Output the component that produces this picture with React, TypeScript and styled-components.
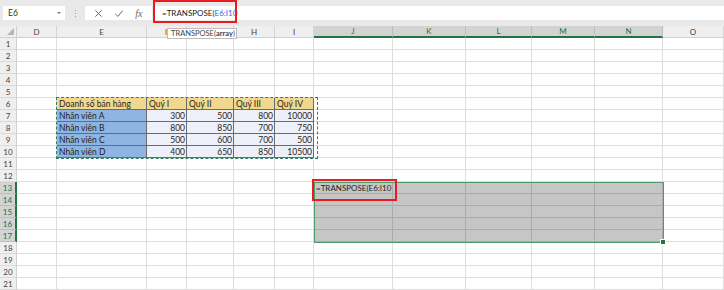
import React from "react";
import styled, { createGlobalStyle } from "styled-components";

const GlobalStyle = createGlobalStyle`
  html, body {
    margin: 0;
    padding: 0;
    background: #ffffff;
    overflow: hidden;
  }
  body {
    font-family: Lato, "Noto Sans", sans-serif;
  }
`;

const GREEN = "#217346";
const RED = "#ea1b1f";

const Page = styled.div`
  position: relative;
  width: 724px;
  height: 290px;
  overflow: hidden;
  background: #fff;
`;

const FormulaBar = styled.div`
  height: 26px;
  background: #e9e9e9;
  display: flex;
  align-items: flex-start;
  padding-top: 6px;
  box-sizing: border-box;
`;

const NameBox = styled.div`
  margin-left: 3px;
  width: 62px;
  height: 14px;
  background: #fff;
  display: flex;
  align-items: center;
  justify-content: space-between;
  padding: 0 4px 0 5px;
  box-sizing: border-box;
  font-size: 8.5px;
  color: #333;
`;

const Caret = styled.span`
  width: 0;
  height: 0;
  border-left: 2px solid transparent;
  border-right: 2px solid transparent;
  border-top: 2px solid #777;
`;

const Dots = styled.div`
  width: 20px;
  height: 14px;
  display: flex;
  flex-direction: column;
  align-items: center;
  justify-content: center;
  gap: 2px;
  span {
    width: 1px;
    height: 1px;
    background: #a0a0a0;
  }
`;

const Buttons = styled.div`
  width: 67px;
  height: 14px;
  background: #fff;
  display: flex;
  align-items: center;
  justify-content: space-around;
  padding: 0 4px;
  box-sizing: border-box;
  color: #666;
`;

const Fx = styled.span`
  font-family: "Liberation Serif", serif;
  font-style: italic;
  font-size: 10px;
  color: #666;
`;

const FormulaInput = styled.div`
  flex: 1;
  margin-left: 1px;
  height: 14px;
  background: #fff;
  display: flex;
  align-items: center;
  padding-left: 9px;
  font-size: 8px;
  color: #222;
`;

const Ref = styled.span`
  color: #2f6bd1;
`;

const Sheet = styled.div`
  display: grid;
  grid-template-columns: 17px 40px 90px 40px 47px 41px 39px 79px 73px 66px 63px 68px 1fr;
  grid-template-rows: 12px repeat(21, 12px);
  font-size: 8.5px;
`;

const Corner = styled.div`
  position: relative;
  background: #efefef;
  border-right: 1px solid #d0d0d0;
  border-bottom: 1px solid #d0d0d0;
  &::after {
    content: "";
    position: absolute;
    right: 2px;
    bottom: 2px;
    border-left: 7px solid transparent;
    border-bottom: 7px solid #b5b5b5;
  }
`;

const ColHead = styled.div<{ $on?: boolean }>`
  background: ${(p) => (p.$on ? "#d3d3d3" : "#efefef")};
  color: ${(p) => (p.$on ? GREEN : "#444")};
  border-right: 1px solid ${(p) => (p.$on ? "#bdbdbd" : "#d4d4d4")};
  border-bottom: ${(p) => (p.$on ? `2px solid ${GREEN}` : "1px solid #d0d0d0")};
  display: flex;
  align-items: center;
  justify-content: center;
  box-sizing: border-box;
  font-size: 8px;
`;

const RowHead = styled.div<{ $on?: boolean }>`
  background: ${(p) => (p.$on ? "#d3d3d3" : "#efefef")};
  color: ${(p) => (p.$on ? GREEN : "#444")};
  border-right: ${(p) => (p.$on ? `2px solid ${GREEN}` : "1px solid #d0d0d0")};
  border-bottom: 1px solid ${(p) => (p.$on ? "#bdbdbd" : "#dadada")};
  display: flex;
  align-items: center;
  justify-content: center;
  box-sizing: border-box;
  font-size: 8px;
`;

type Kind = "plain" | "head" | "name" | "data" | "sel";

const fills: Record<Kind, string> = {
  plain: "#ffffff",
  head: "#f0d88e",
  name: "#8db4e2",
  data: "#edf0f8",
  sel: "#c6c6c6",
};

const lines: Record<Kind, string> = {
  plain: "#dedede",
  head: "#6b6b6b",
  name: "#6b6b6b",
  data: "#6b6b6b",
  sel: "#ababab",
};

const Cell = styled.div<{ $kind: Kind; $right?: boolean; $spill?: boolean }>`
  background: ${(p) => fills[p.$kind]};
  border-right: 1px solid ${(p) => lines[p.$kind]};
  border-bottom: 1px solid ${(p) => lines[p.$kind]};
  box-sizing: border-box;
  display: flex;
  align-items: center;
  justify-content: ${(p) => (p.$right ? "flex-end" : "flex-start")};
  padding: 0 1px 0 2px;
  white-space: nowrap;
  overflow: visible;
  color: #1f1f1f;
  font-size: ${(p) => (p.$spill ? "8px" : "inherit")};
  z-index: ${(p) => (p.$spill ? 2 : p.$kind === "sel" ? 0 : 1)};
`;

const Title = styled.div`
  position: absolute;
  left: 293px;
  top: 54px;
  font-family: "Liberation Serif", "DejaVu Serif", serif;
  font-weight: 700;
  font-size: 35px;
  line-height: 35px;
  color: ${RED};
  white-space: nowrap;
`;

const Tooltip = styled.div`
  position: absolute;
  left: 167px;
  top: 28px;
  width: 70px;
  height: 11px;
  padding: 0 3px;
  background: #fff;
  border: 1px solid #bdbdbd;
  box-sizing: border-box;
  display: flex;
  align-items: center;
  font-size: 7.5px;
  color: #444;
  z-index: 5;
  b {
    font-weight: 700;
  }
`;

const Sliver = styled.div`
  position: absolute;
  left: 165px;
  top: 29px;
  width: 2px;
  height: 6px;
  background: #f0a24a;
`;

const RedBox = styled.div<{ $x: number; $y: number; $w: number; $h: number }>`
  position: absolute;
  left: ${(p) => p.$x}px;
  top: ${(p) => p.$y}px;
  width: ${(p) => p.$w}px;
  height: ${(p) => p.$h}px;
  border: 2.5px solid ${RED};
  box-sizing: border-box;
  z-index: 6;
`;

const Ants = styled.div`
  position: absolute;
  left: 56px;
  top: 97px;
  width: 262px;
  height: 62px;
  border: 1.5px dashed #2d7f61;
  box-sizing: border-box;
  z-index: 4;
`;

const Selection = styled.div`
  position: absolute;
  left: 314px;
  top: 182px;
  width: 350px;
  height: 61px;
  border: 1px solid #4f9a6c;
  box-sizing: border-box;
  z-index: 4;
  &::after {
    content: "";
    position: absolute;
    right: -3px;
    bottom: -3px;
    width: 4px;
    height: 4px;
    background: ${GREEN};
    border: 1px solid #fff;
  }
`;

const cols = ["D", "E", "F", "G", "H", "I", "J", "K", "L", "M", "N", "O"];
const selCols = ["J", "K", "L", "M", "N"];
// F and G headers sit under the function tooltip
const hiddenHeads = ["F", "G"];

const table: Record<number, (string | number)[]> = {
  6: ["Doanh số bán hàng", "Quý I", "Quý II", "Quý III", "Quý IV"],
  7: ["Nhân viên A", 300, 500, 800, 10000],
  8: ["Nhân viên B", 800, 850, 700, 750],
  9: ["Nhân viên C", 500, 600, 700, 500],
  10: ["Nhân viên D", 400, 650, 850, 10500],
};

function cellFor(row: number, col: string, ci: number) {
  const tableCol = ci - 1; // E is index 1
  if (table[row] && tableCol >= 0 && tableCol <= 4) {
    const v = table[row][tableCol];
    const kind: Kind = row === 6 ? "head" : tableCol === 0 ? "name" : "data";
    return (
      <Cell key={col} $kind={kind} $right={typeof v === "number"}>
        {v}
      </Cell>
    );
  }
  if (row >= 13 && row <= 17 && selCols.includes(col)) {
    const first = row === 13 && col === "J";
    return (
      <Cell key={col} $kind="sel" $spill={first}>
        {first ? "=TRANSPOSE(E6:I10" : null}
      </Cell>
    );
  }
  return <Cell key={col} $kind="plain" />;
}

export default function App() {
  const rows = Array.from({ length: 21 }, (_, i) => i + 1);
  return (
    <Page>
      <GlobalStyle />
      <FormulaBar>
        <NameBox>
          E6
          <Caret />
        </NameBox>
        <Dots>
          <span />
          <span />
          <span />
        </Dots>
        <Buttons>
          <svg width="9" height="9" viewBox="0 0 10 10">
            <path d="M1.5 1.5 L8.5 8.5 M8.5 1.5 L1.5 8.5" stroke="#666" strokeWidth="1.1" />
          </svg>
          <svg width="10" height="9" viewBox="0 0 10 10">
            <path d="M1 5.5 L3.8 8.2 L9 1.8" stroke="#666" strokeWidth="1.1" fill="none" />
          </svg>
          <Fx>fx</Fx>
        </Buttons>
        <FormulaInput>
          =TRANSPOSE(<Ref>E6:I10</Ref>
        </FormulaInput>
      </FormulaBar>
      <Sheet>
        <Corner />
        {cols.map((c) => (
          <ColHead key={c} $on={selCols.includes(c)}>
            {hiddenHeads.includes(c) ? null : c}
          </ColHead>
        ))}
        {rows.map((r) => (
          <React.Fragment key={r}>
            <RowHead $on={r >= 13 && r <= 17}>{r}</RowHead>
            {cols.map((c, ci) => cellFor(r, c, ci))}
          </React.Fragment>
        ))}
      </Sheet>
      <Title>Nhập hàm Transpose</Title>
      <Sliver />
      <Tooltip>
        TRANSPOSE(<b>array</b>)
      </Tooltip>
      <RedBox $x={153} $y={0} $w={84} $h={23} />
      <RedBox $x={312} $y={179} $w={85} $h={22} />
      <Ants />
      <Selection />
    </Page>
  );
}
